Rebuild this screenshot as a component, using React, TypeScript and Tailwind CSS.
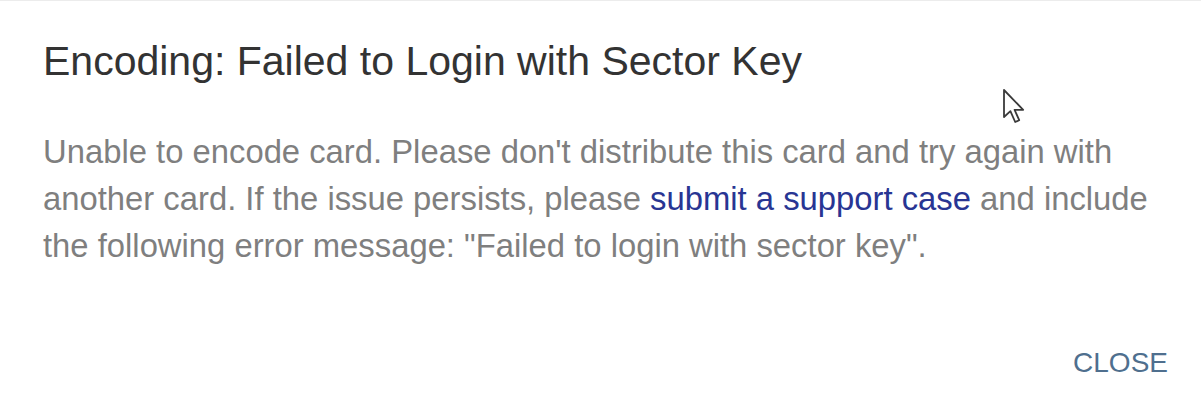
import React from 'react';

// Mouse pointer captured in the screenshot
const Pointer: React.FC = () => (
    <svg
        className="absolute left-[1002px] top-[87px]"
        width="26"
        height="36"
        viewBox="0 0 13 18"
        fill="none"
    >
        <path
            d="M1 1 L1 14.5 L4.2 11.6 L6.6 17 L8.6 16.1 L6.3 10.9 L10.6 10.9 Z"
            fill="#ffffff"
            stroke="#3a3a3a"
            strokeWidth="0.9"
            strokeLinejoin="round"
        />
    </svg>
);

const App: React.FC = () => {
    return (
        <div
            className="relative h-[412px] w-full overflow-hidden bg-white border-t border-[#ececec]"
            style={{ fontFamily: "'Liberation Sans', Arial, sans-serif" }}
        >
            <div className="flex h-full flex-col">
                <h2 className="pl-[43px] pt-[36px] text-[41px] leading-[48px] font-normal text-[#333333]">
                    Encoding: Failed to Login with Sector Key
                </h2>

                <p className="mt-[43px] pl-[43px] pr-[33px] text-[32.8px] leading-[47px] text-[#7f7f7f]">
                    Unable to encode card. Please don't distribute this card and try again with
                    another card. If the issue persists, please{' '}
                    <a href="#" className="text-[#283593]">
                        submit a support case
                    </a>{' '}
                    and include the following error message: "Failed to login with sector key".
                </p>

                <div className="mt-auto flex justify-end pr-[33px] pb-[33px]">
                    <button className="text-[28px] leading-[32px] text-[#4f6f8e] uppercase">
                        Close
                    </button>
                </div>
            </div>

            <Pointer />
        </div>
    );
};

export default App;
